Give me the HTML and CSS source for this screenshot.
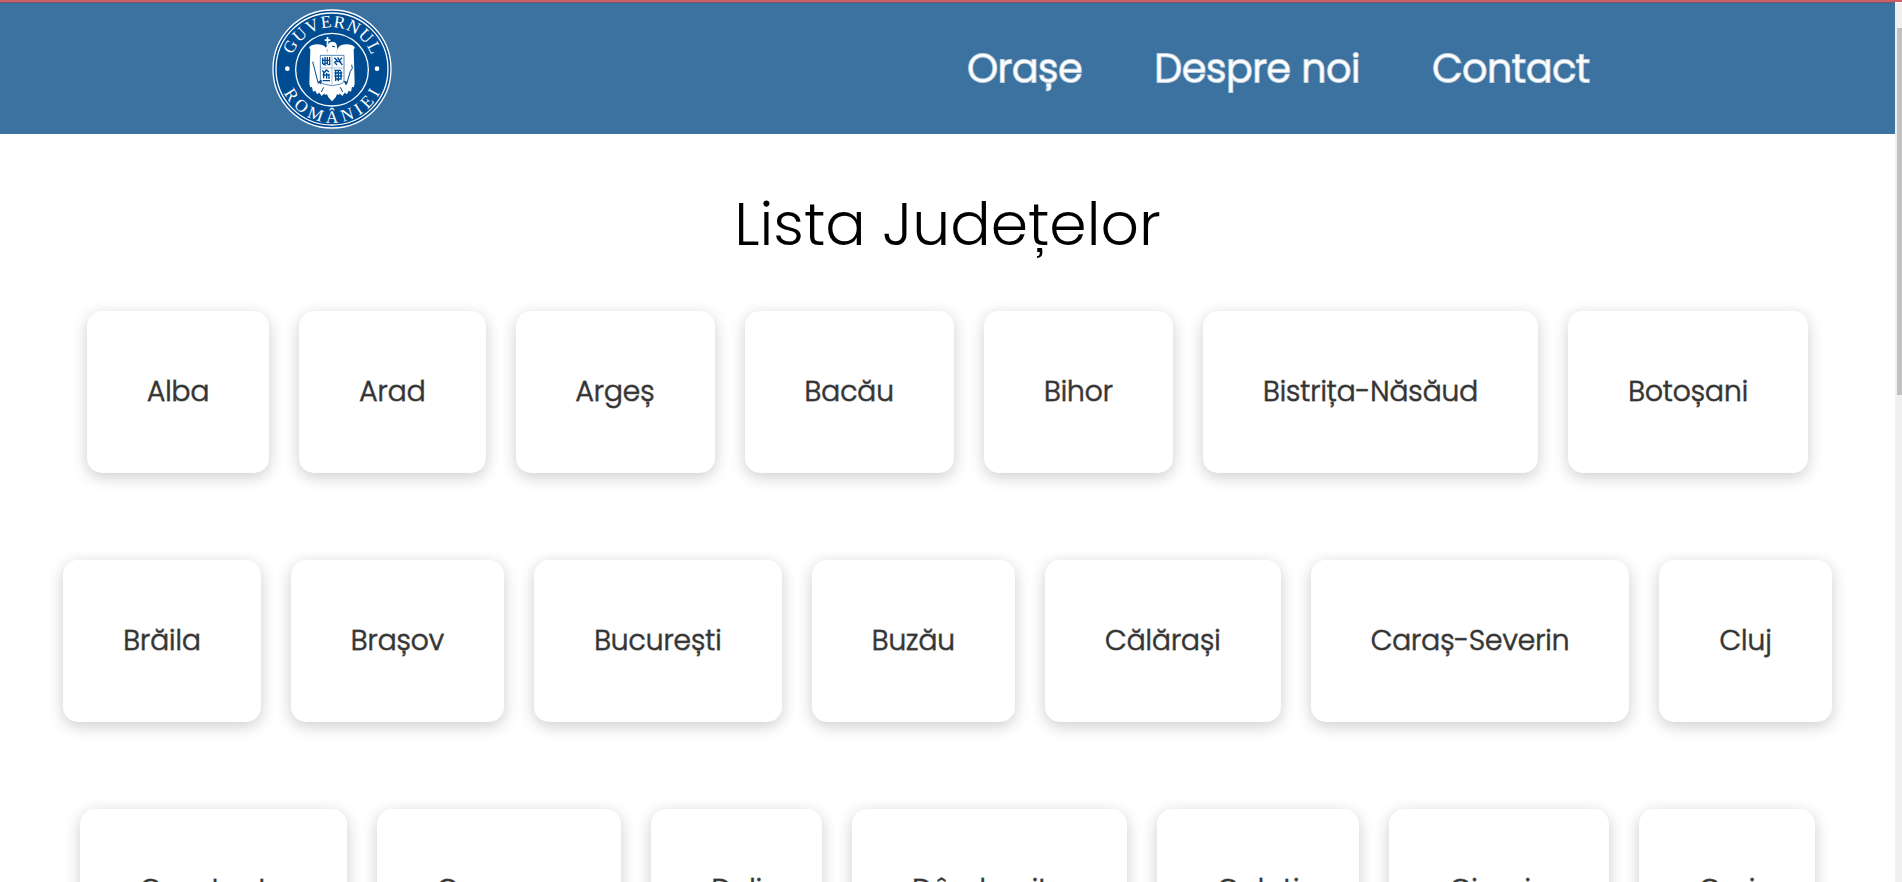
FILE: index.html
```html
<!DOCTYPE html>
<html lang="ro">
<head>
<meta charset="utf-8">
<meta name="viewport" content="width=device-width, initial-scale=1">
<title>Lista Județelor</title>
<link rel="stylesheet" href="styles.css">
</head>
<body>
<header class="header">
  <a class="logo" href="#" aria-label="Guvernul României">
    <svg class="logo-img" viewBox="29 27 360 360" aria-hidden="true">
      <defs>
        <path id="arc-top" d="M84 207a125 125 0 0 1 250 0"/>
        <path id="arc-bottom" d="M48 207a161 161 0 0 0 322 0"/>
      </defs>
      <circle cx="209" cy="207" r="177" fill="#004c93" stroke="#fff" stroke-width="4"/>
      <circle cx="209" cy="207" r="168" fill="none" stroke="#fff" stroke-width="4"/>
      <circle cx="209" cy="209" r="109" fill="none" stroke="#fff" stroke-width="4"/>
      <circle cx="75" cy="206" r="7" fill="#fff"/>
      <circle cx="344" cy="206" r="7" fill="#fff"/>
      <text class="seal-text" dx="0 3 3 3 3 3 3 3"><textPath href="#arc-top" startOffset="50%">GUVERNUL</textPath></text>
      <text class="seal-text" dx="0 14 14 14 14 14 14 14"><textPath href="#arc-bottom" startOffset="50%">ROMÂNIEI</textPath></text>
      <g fill="#fff">
        <path d="M187 118h6v-7h5v7h6v5h-6v14h-5v-14h-6z"/>
        <path d="M188 146l10-14c5-8 21-10 25 2 3 8 0 14 0 24v14h-28v-14c0-6 2-8-1-11z"/>
        <path d="M198 180c0-24-4-40-18-45-14-4-34-2-40 8l4 5-3 104 3 10 5-1 3 14 7-3 5 11 7-5 7 10 7-7 5 4 10-8z"/>
        <path d="M220 180c0-24 4-40 18-45 14-4 34-2 40 8l-4 5 3 104-3 10-5-1-3 14-7-3-5 11-7-5-7 10-7-7-5 4-10-8z"/>
        <path d="M190 250l18-4 20 4 8 22-10 6-6 14-11 12-11-12-6-14-10-6z"/>
      </g>
      <path d="M174 166h71v76q-3 10-14 11l-21 4-22-4q-12-1-14-11z" fill="#fff" stroke="#004c93" stroke-width="2"/>
      <path d="M175 204h69M209 166v88" stroke="#7fa6cb" stroke-width="2"/>
      <g fill="none" stroke="#004c93" stroke-width="4">
        <path d="M181 173v20m7-22v26m7-26v20m7-20v24M180 181h24M182 194l8-5 11 6"/>
        <path d="M216 173l8 8-7 6 7 8m2-23l5 10 8-9m-7 12l8 10m-21-10h18"/>
        <path d="M180 211l6 7 6-8 8 6m-19 9h21m-18-9v19m9-16v17m7-15v16m-19 5h22"/>
        <path d="M216 211h20m-20 8h24m-24 9h24m-22 9h20m-18-26v32m8-32v33m8-30v25"/>
      </g>
      <g fill="none" stroke="#004c93" stroke-width="3">
        <path d="M151 185l17 66M268 194q6 12-4 20l-10 34"/>
        <path d="M168 246l9-5-2 10zM246 244l9 3-4 7z" fill="#004c93"/>
        <path d="M209 139l9 1M184 262l-7 14M234 262l7 14"/>
      </g>
    </svg>
  </a>
  <nav class="nav">
    <a href="#">Orașe</a>
    <a href="#">Despre noi</a>
    <a href="#">Contact</a>
  </nav>
</header>
<main class="main">
  <h1 class="title">Lista Județelor</h1>
  <div class="counties">
    <div class="row">
      <a class="card" href="#">Alba</a>
      <a class="card" href="#">Arad</a>
      <a class="card" href="#">Argeș</a>
      <a class="card" href="#">Bacău</a>
      <a class="card" href="#">Bihor</a>
      <a class="card" href="#">Bistrița-Năsăud</a>
      <a class="card" href="#">Botoșani</a>
    </div>
    <div class="row">
      <a class="card" href="#">Brăila</a>
      <a class="card" href="#">Brașov</a>
      <a class="card" href="#">București</a>
      <a class="card" href="#">Buzău</a>
      <a class="card" href="#">Călărași</a>
      <a class="card" href="#">Caraș-Severin</a>
      <a class="card" href="#">Cluj</a>
    </div>
    <div class="row">
      <a class="card" href="#">Constanța</a>
      <a class="card" href="#">Covasna</a>
      <a class="card" href="#">Dolj</a>
      <a class="card" href="#">Dâmbovița</a>
      <a class="card" href="#">Galați</a>
      <a class="card" href="#">Giurgiu</a>
      <a class="card" href="#">Gorj</a>
    </div>
  </div>
</main>
<div class="scrollbar" aria-hidden="true"><div class="thumb"></div></div>
</body>
</html>
```
FILE: styles.css
```css
* {
  box-sizing: border-box;
}

html {
  height: 100%;
  overflow: hidden;
}

body {
  height: 100%;
  margin: 0;
  padding-right: 7px;
  overflow: hidden;
  border-top: 2px solid #cc6069;
  background: #fff;
  font-family: Poppins, Inter, "Open Sans", sans-serif;
}

a {
  color: inherit;
  text-decoration: none;
}

.header {
  display: flex;
  align-items: center;
  justify-content: space-between;
  padding: 6px 305px 5px 272px;
  border-top: 1px solid #76586f;
  background: #3c72a0;
}

.logo-img {
  display: block;
  width: 120px;
  height: 120px;
}

.seal-text {
  fill: #fff;
  font-family: "Liberation Serif", serif;
  font-size: 52px;
  text-anchor: middle;
}

.nav {
  display: flex;
  gap: 72px;
  color: #fff;
  font-size: 39px;
  font-weight: 300;
  line-height: 60px;
  -webkit-text-stroke: 2px rgba(255, 255, 255, 0.7);
}

.title {
  margin: 0;
  padding: 45px 0 42px;
  color: #000;
  font-size: 60px;
  font-weight: 300;
  line-height: 90px;
  text-align: center;
}

.counties {
  display: flex;
  flex-direction: column;
  gap: 87px;
}

.row {
  display: flex;
  justify-content: center;
  gap: 30px;
}

.card {
  padding: 60px;
  border-radius: 15px;
  background: #fff;
  box-shadow: 0 4px 16px rgba(0, 0, 0, 0.2);
  color: #333;
  font-size: 28px;
  font-weight: 300;
  line-height: 42px;
  white-space: nowrap;
  -webkit-text-stroke: 1px rgba(51, 51, 51, 0.7);
}

.scrollbar {
  position: fixed;
  top: 3px;
  right: 0;
  bottom: 0;
  width: 7px;
  padding: 25px 0 0 2px;
  background: #f0f0f0;
}

.thumb {
  height: 43%;
  background: #c1c1c1;
}
```
